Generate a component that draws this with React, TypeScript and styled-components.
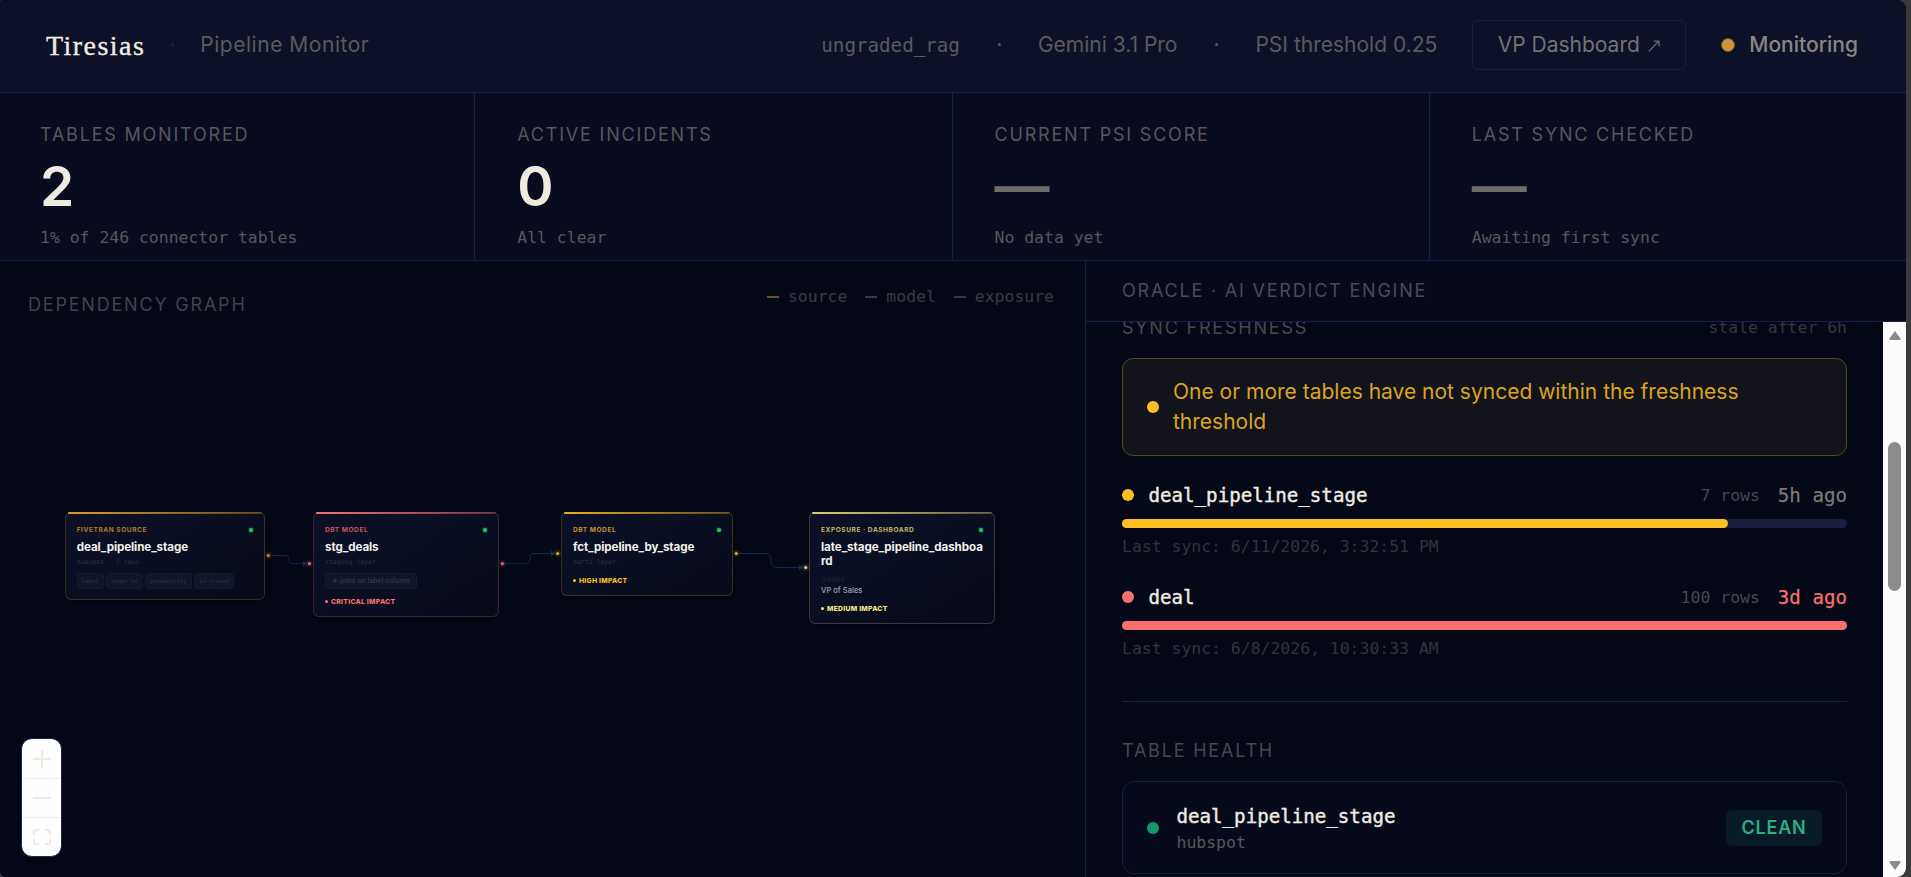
import React from 'react';
import styled, { createGlobalStyle } from 'styled-components';

const line = '#1a1f47';
const ink = '#050817';
const cream = '#f0ebe1';
const amber = '#fbbf24';
const red = '#f87171';
const sans = `Inter, "Liberation Sans", sans-serif`;
const mono = `Consolas, "DejaVu Sans Mono", monospace`;

const Global = createGlobalStyle`
  *, *::before, *::after { box-sizing: border-box; }
  html, body { margin: 0; height: 100%; background: #3a3a3a; overflow: hidden; }
`;

const Frame = styled.div`
  width: 1906px;
  height: 877px;
  overflow: hidden;
  border-radius: 3px 9px 9px 6px;
  background: ${ink};
  font-family: ${sans};
  color: ${cream};
`;
const Page = styled.div`
  width: 1908px;
  height: 877px;
  margin-left: -2px;
  display: flex;
  flex-direction: column;
`;

const Header = styled.header`
  height: 93px;
  flex: none;
  display: flex;
  align-items: center;
  padding: 0 48px;
  padding-bottom: 3px;
  background: #0d1127;
  border-bottom: 1px solid ${line};
`;
const Brand = styled.div`
  font: 400 28px/34px "Liberation Serif", serif;
  letter-spacing: 1.45px;
  -webkit-text-stroke: 0.35px ${cream};
  padding-top: 3px;
`;
const BrandDot = styled.span`
  width: 3px;
  height: 3px;
  border-radius: 50%;
  background: #20264f;
  margin: 0 26px;
`;
const Section = styled.div`
  font-size: 21px;
  letter-spacing: 0.53px;
  color: #5b595d;
`;
const HeaderMeta = styled.div`
  margin-left: auto;
  display: flex;
  align-items: center;
  font-size: 21px;
  color: #5b595d;
  white-space: nowrap;
`;
const Mono = styled.span`
  padding-top: 1px;
  font-family: ${mono};
  font-size: 19.2px;
`;
const MetaDot = styled.span`
  width: 3px;
  height: 3px;
  border-radius: 50%;
  background: #5b595d;
  margin: 0 37px 0 38px;
`;
const LinkButton = styled.button`
  width: 214px;
  height: 50px;
  margin: 0 35px;
  padding: 0 1px 0 0;
  border: 1px solid ${line};
  border-radius: 6px;
  background: transparent;
  color: #747175;
  font: 400 21px ${sans};
  display: flex;
  align-items: center;
  justify-content: center;
  gap: 8px;
  svg { margin-top: 3px; }
`;
const Live = styled.div`
  display: flex;
  align-items: center;
  gap: 14px;
  font-weight: 500;
  color: #898681;
`;
const LiveDot = styled.span`
  width: 14px;
  height: 14px;
  border-radius: 50%;
  background: #cb983b;
  border: 1px solid #6c5430;
`;

const Stats = styled.section`
  height: 168px;
  flex: none;
  display: grid;
  grid-template-columns: repeat(4, 1fr);
  gap: 1px;
  background: ${line};
  border-bottom: 1px solid ${line};
`;
const Stat = styled.div`
  background: #090b1f;
  padding: 31px 42px 0;
`;
const Caption = styled.div<{ $color?: string }>`
  font-size: 18px;
  line-height: 22px;
  letter-spacing: 1.8px;
  text-transform: uppercase;
  color: ${p => p.$color ?? '#58565a'};
  white-space: nowrap;
`;
const Figure = styled.div<{ $muted?: boolean }>`
  font-size: 55px;
  font-weight: 600;
  line-height: 56px;
  margin-top: 12px;
  letter-spacing: -1.1px;
  color: ${p => (p.$muted ? '#706d6d' : cream)};
`;
const StatNote = styled.div`
  font-family: ${mono};
  font-size: 16.45px;
  line-height: 20px;
  margin-top: 14px;
  color: #58565a;
`;

const Main = styled.main`
  flex: 1;
  min-height: 0;
  display: flex;
`;
const Graph = styled.section`
  width: 1087px;
  flex: none;
  display: flex;
  flex-direction: column;
  position: relative;
  background: ${ink};
`;
const GraphHead = styled.div`
  display: flex;
  justify-content: space-between;
  align-items: flex-start;
  padding: 26px 31px 0 30px;
`;
const GraphTitle = styled(Caption)`
  margin-top: 7px;
`;
const Legend = styled.div`
  display: flex;
  gap: 18px;
  font-family: ${mono};
  font-size: 16.45px;
  line-height: 20px;
  color: #3a3a43;
`;
const LegendItem = styled.span<{ $color: string }>`
  display: flex;
  align-items: center;
  gap: 9px;
  &::before {
    content: '';
    width: 12px;
    height: 2px;
    background: ${p => p.$color};
  }
`;

const Canvas = styled.div`
  position: absolute;
  left: 2px;
  top: -261px;
  width: 1085px;
  height: 877px;
  pointer-events: none;
`;
const Edges = styled.svg`
  position: absolute;
  inset: 0;
  fill: none;
  stroke: #1b2350;
  stroke-width: 1;
`;
const NodeCard = styled.article<{ $x: number; $w: number; $h: number; $c: string }>`
  position: absolute;
  left: ${p => p.$x}px;
  top: 511.5px;
  width: ${p => p.$w}px;
  height: ${p => p.$h}px;
  padding: 13px 11px 0;
  border: 1px solid ${p => p.$c}38;
  border-radius: 6px;
  background: linear-gradient(145deg, #0c1127, #070b1a);
  box-shadow: 0 3px 10px rgba(0, 0, 0, 0.4);
  &::before {
    content: '';
    position: absolute;
    left: 2px;
    right: 2px;
    top: -0.5px;
    height: 1.6px;
    border-radius: 2px;
    background: linear-gradient(90deg, ${p => p.$c}, ${p => p.$c}55);
  }
`;
const NodeTop = styled.div<{ $c: string }>`
  display: flex;
  justify-content: space-between;
  align-items: center;
  height: 8px;
  font-size: 6.6px;
  font-weight: 700;
  letter-spacing: 0.53px;
  color: ${p => p.$c};
  white-space: nowrap;
  &::after {
    content: '';
    width: 4px;
    height: 4px;
    border-radius: 50%;
    background: #22c55e;
    box-shadow: 0 0 2px #22c55e;
  }
`;
const NodeName = styled.div`
  margin-top: 6px;
  margin-right: -3px;
  font-size: 11.6px;
  font-weight: 700;
  line-height: 14px;
  letter-spacing: -0.07px;
  color: #f3f1ec;
  word-break: break-all;
`;
const NodeSub = styled.div`
  margin-top: 4px;
  font-family: ${mono};
  font-size: 6.5px;
  line-height: 9px;
  color: #2a3146;
`;
const Chips = styled.div`
  display: flex;
  gap: 2px;
  margin-top: 6px;
`;
const Chip = styled.span<{ $bold?: boolean }>`
  height: 16px;
  padding: 0 ${p => (p.$bold ? 6 : 4.3)}px;
  border: 1px solid #151b2e;
  border-radius: 3px;
  background: #101527;
  color: #2e3549;
  font-family: ${p => (p.$bold ? sans : mono)};
  font-weight: ${p => (p.$bold ? 600 : 400)};
  font-size: ${p => (p.$bold ? 6.9 : 5.5)}px;
  line-height: 14px;
  white-space: nowrap;
`;
const Impact = styled.div<{ $c: string; $top: number }>`
  display: flex;
  align-items: center;
  gap: 3px;
  margin-top: ${p => p.$top}px;
  height: 9px;
  font-size: 6.8px;
  font-weight: 800;
  letter-spacing: 0.27px;
  color: ${p => p.$c};
  &::before {
    content: '';
    width: 3px;
    height: 3px;
    border-radius: 50%;
    background: currentColor;
  }
`;
const Owner = styled.div`
  margin-top: 8px;
  font-size: 5.8px;
  line-height: 8px;
  letter-spacing: 0.5px;
  color: #222a3c;
`;
const OwnerName = styled.div`
  margin-top: 2px;
  font-size: 7.6px;
  font-weight: 500;
  line-height: 10px;
  color: #9aa4b5;
`;
const Controls = styled.div`
  position: absolute;
  left: 23px;
  bottom: 20px;
  width: 41px;
  height: 119px;
  border: 1px solid #1b2350;
  border-radius: 11px;
  background: #fefefe;
  overflow: hidden;
  display: grid;
  grid-template-rows: 1fr 1fr 1fr;
  box-shadow: 0 4px 14px rgba(0, 0, 0, 0.5);
`;
const ControlButton = styled.button`
  border: 0;
  padding: 0;
  background: transparent;
  display: flex;
  align-items: center;
  justify-content: center;
  & + & { border-top: 1px solid #ececec; }
  svg { fill: none; stroke: #f0ebe1; stroke-width: 2; }
`;

const Oracle = styled.section`
  flex: 1;
  min-width: 0;
  display: flex;
  flex-direction: column;
  border-left: 1px solid ${line};
`;
const OracleHead = styled.div`
  height: 61px;
  flex: none;
  padding: 19px 36px 0;
  background: #070a1b;
  border-bottom: 1px solid ${line};
`;
const ScrollRow = styled.div`
  flex: 1;
  min-height: 0;
  display: flex;
`;
const Scroll = styled.div`
  flex: 1;
  min-width: 0;
  overflow: hidden;
  padding: 0 36px;
  background: ${ink};
`;
const SectionHead = styled.div`
  display: flex;
  justify-content: space-between;
  align-items: center;
  height: 22px;
  margin-top: -5px;
`;
const HeadNote = styled.span`
  font-family: ${mono};
  font-size: 16.45px;
  line-height: 22px;
  color: #35353c;
`;
const Alert = styled.div`
  height: 98px;
  margin-top: 19px;
  padding: 0 24px;
  display: flex;
  align-items: center;
  gap: 14px;
  border: 1px solid #57451c;
  border-radius: 11px;
  background: #13131b;
  color: #daa522;
  font-size: 21px;
  line-height: 30px;
`;
const Dot = styled.span<{ $c: string }>`
  width: 12px;
  height: 12px;
  flex: none;
  border-radius: 50%;
  background: ${p => p.$c};
`;
const Sync = styled.div<{ $top: number }>`
  margin-top: ${p => p.$top}px;
`;
const SyncRow = styled.div`
  display: flex;
  align-items: center;
  height: 26px;
`;
const TableName = styled.span`
  font-family: ${mono};
  font-size: 19.15px;
  line-height: 26px;
  color: ${cream};
  -webkit-text-stroke: 0.4px currentColor;
`;
const SyncName = styled(TableName)`
  margin-left: 14.5px;
  padding-top: 1px;
`;
const Rows = styled.span`
  margin-left: auto;
  font-family: ${mono};
  font-size: 16.45px;
  color: #48474c;
`;
const Age = styled.span<{ $c: string }>`
  margin-left: 18px;
  padding-top: 1px;
  font-family: ${mono};
  font-size: 19.15px;
  color: ${p => p.$c};
  -webkit-text-stroke: 0.25px currentColor;
`;
const Track = styled.div`
  height: 9px;
  margin-top: 11px;
  border-radius: 5px;
  background: #1a1f42;
`;
const Fill = styled.div<{ $c: string }>`
  height: 9px;
  border-radius: 5px;
  background: ${p => p.$c};
`;
const LastSync = styled.div`
  margin-top: 9px;
  font-family: ${mono};
  font-size: 16.45px;
  line-height: 20px;
  color: #333339;
`;
const Divider = styled.div`
  height: 1px;
  margin: 42px 0 38px;
  background: ${line};
`;
const HealthCard = styled.div`
  height: 93px;
  margin-top: 19px;
  padding: 0 24px;
  display: flex;
  align-items: center;
  border: 1px solid ${line};
  border-radius: 12px;
  background: #070a1b;
`;
const HealthText = styled.div`
  display: flex;
  flex-direction: column;
  margin-left: 17.5px;
  padding-top: 4px;
`;
const HealthSource = styled.span`
  font-family: ${mono};
  font-size: 16.45px;
  line-height: 26px;
  color: #58565a;
`;
const Badge = styled.span`
  width: 96px;
  height: 36px;
  margin-left: auto;
  border-radius: 6px;
  background: #081b27;
  color: #2cae80;
  font-size: 18px;
  font-weight: 600;
  letter-spacing: 0.8px;
  line-height: 36px;
  text-align: center;
`;
const Scrollbar = styled.div`
  width: 23px;
  padding: 9px 5px 7px;
  background: #fcfcfc;
  display: flex;
  flex-direction: column;
  align-items: center;
  svg { flex: none; fill: #8b8b8b; }
`;
const Thumb = styled.div`
  width: 13px;
  height: 149px;
  margin-top: 102px;
  margin-bottom: auto;
  border-radius: 7px;
  background: #8b8b8b;
`;

const stats = [
  { label: 'Tables monitored', value: '2', note: '1% of 246 connector tables' },
  { label: 'Active incidents', value: '0', note: 'All clear' },
  { label: 'Current PSI score', value: '—', note: 'No data yet' },
  { label: 'Last sync checked', value: '—', note: 'Awaiting first sync' },
];

const edges = [
  'M272 555.5H286Q289 555.5 289 559.5Q289 563.7 293 563.7H303',
  'M505 563.7H526Q530 563.7 530 558.6Q530 553.5 534 553.5H551',
  'M739 553.5H766Q771 553.5 771 560.5Q771 567.5 776 567.5H799',
];
const arrows = [[303, 563.7], [551, 553.5], [799, 567.5]];
const handles: [number, number, string][] = [
  [268.3, 555.5, '#d99a2b'], [309.5, 563.7, red], [502.3, 563.7, red],
  [557.7, 553.5, amber], [736.2, 553.5, amber], [805.8, 567.5, '#fde68a'],
];

export default function App() {
  return (
    <Frame>
      <Global />
      <Page>
        <Header>
          <Brand>Tiresias</Brand>
          <BrandDot />
          <Section>Pipeline Monitor</Section>
          <HeaderMeta>
            <Mono>ungraded_rag</Mono>
            <MetaDot />
            <span>Gemini 3.1 Pro</span>
            <MetaDot />
            <span>PSI threshold 0.25</span>
            <LinkButton>
              VP Dashboard
              <svg width="12" height="12" viewBox="0 0 12 12" fill="none" stroke="currentColor" strokeWidth="1.2">
                <path d="M.8 11.4L10.6 1.4M5.8 1.1H11V6.2" />
              </svg>
            </LinkButton>
            <Live><LiveDot />Monitoring</Live>
          </HeaderMeta>
        </Header>
        <Stats>
          {stats.map(s => (
            <Stat key={s.label}>
              <Caption>{s.label}</Caption>
              <Figure $muted={s.value === '—'}>{s.value}</Figure>
              <StatNote>{s.note}</StatNote>
            </Stat>
          ))}
        </Stats>
        <Main>
          <Graph>
            <GraphHead>
              <GraphTitle $color="#434249">Dependency graph</GraphTitle>
              <Legend>
                <LegendItem $color="#6b4f1e">source</LegendItem>
                <LegendItem $color="#3a3a43">model</LegendItem>
                <LegendItem $color="#3a3a43">exposure</LegendItem>
              </Legend>
            </GraphHead>
            <Canvas>
              <Edges width="1085" height="877">
                {edges.map(d => <path key={d} d={d} />)}
                {arrows.map(([x, y]) => (
                  <path key={x} d={`M${x} ${y - 3}L${x + 4} ${y}L${x} ${y + 3}Z`} fill="#232b5c" stroke="none" />
                ))}
                {handles.map(([x, y, c]) => (
                  <g key={x} stroke="none" fill={c}>
                    <circle cx={x} cy={y} r="3.4" opacity="0.15" />
                    <circle cx={x} cy={y} r="1.6" />
                  </g>
                ))}
              </Edges>
              <NodeCard $x={64.7} $w={200.3} $h={88.3} $c="#d99a2b">
                <NodeTop $c="#b07a2c">FIVETRAN SOURCE</NodeTop>
                <NodeName>deal_pipeline_stage</NodeName>
                <NodeSub>hubspot · 7 rows</NodeSub>
                <Chips>
                  <Chip>label</Chip><Chip>stage_id</Chip><Chip>probability</Chip><Chip>is_closed</Chip>
                </Chips>
              </NodeCard>
              <NodeCard $x={313} $w={186} $h={105} $c={red}>
                <NodeTop $c="#c9525b">DBT MODEL</NodeTop>
                <NodeName>stg_deals</NodeName>
                <NodeSub>staging layer</NodeSub>
                <Chips><Chip $bold>✦ joins on label column</Chip></Chips>
                <Impact $c={red} $top={8}>CRITICAL IMPACT</Impact>
              </NodeCard>
              <NodeCard $x={561} $w={172} $h={84.3} $c="#e5ad22">
                <NodeTop $c="#c4902a">DBT MODEL</NodeTop>
                <NodeName>fct_pipeline_by_stage</NodeName>
                <NodeSub>marts layer</NodeSub>
                <Impact $c={amber} $top={9}>HIGH IMPACT</Impact>
              </NodeCard>
              <NodeCard $x={809} $w={186} $h={112.3} $c="#e0cb77">
                <NodeTop $c="#c9b465">EXPOSURE · DASHBOARD</NodeTop>
                <NodeName>late_stage_pipeline_dashboard</NodeName>
                <Owner>OWNER</Owner>
                <OwnerName>VP of Sales</OwnerName>
                <Impact $c="#fde68a" $top={8}>MEDIUM IMPACT</Impact>
              </NodeCard>
            </Canvas>
            <Controls>
              <ControlButton aria-label="Zoom in">
                <svg width="18" height="18"><path d="M0 9H18M9 0V18" /></svg>
              </ControlButton>
              <ControlButton aria-label="Zoom out">
                <svg width="18" height="18"><path d="M0 9H18" /></svg>
              </ControlButton>
              <ControlButton aria-label="Fit view">
                <svg width="18" height="16"><path d="M1 6V3Q1 1 3 1H6M12 1H15Q17 1 17 3V6M17 10V13Q17 15 15 15H12M6 15H3Q1 15 1 13V10" /></svg>
              </ControlButton>
            </Controls>
          </Graph>
          <Oracle>
            <OracleHead><Caption $color="#4b4a50">Oracle · AI verdict engine</Caption></OracleHead>
            <ScrollRow>
              <Scroll>
                <SectionHead>
                  <Caption $color="#48474c">Sync freshness</Caption>
                  <HeadNote>stale after 6h</HeadNote>
                </SectionHead>
                <Alert>
                  <Dot $c={amber} />
                  <span>One or more tables have not synced within the freshness threshold</span>
                </Alert>
                <Sync $top={26}>
                  <SyncRow>
                    <Dot $c={amber} />
                    <SyncName>deal_pipeline_stage</SyncName>
                    <Rows>7 rows</Rows>
                    <Age $c="#7d7a76">5h ago</Age>
                  </SyncRow>
                  <Track><Fill $c={amber} style={{ width: '83.6%' }} /></Track>
                  <LastSync>Last sync: 6/11/2026, 3:32:51 PM</LastSync>
                </Sync>
                <Sync $top={27}>
                  <SyncRow>
                    <Dot $c={red} />
                    <SyncName>deal</SyncName>
                    <Rows>100 rows</Rows>
                    <Age $c={red}>3d ago</Age>
                  </SyncRow>
                  <Track><Fill $c={red} style={{ width: '100%' }} /></Track>
                  <LastSync>Last sync: 6/8/2026, 10:30:33 AM</LastSync>
                </Sync>
                <Divider />
                <Caption $color="#48474c">Table health</Caption>
                <HealthCard>
                  <Dot $c="#12966c" />
                  <HealthText>
                    <TableName>deal_pipeline_stage</TableName>
                    <HealthSource>hubspot</HealthSource>
                  </HealthText>
                  <Badge>CLEAN</Badge>
                </HealthCard>
              </Scroll>
              <Scrollbar>
                <svg width="12" height="9"><path d="M6 0L11.5 7.5Q11.5 9 10.5 9H1.5Q.5 9 .5 7.5Z" /></svg>
                <Thumb />
                <svg width="12" height="9"><path d="M6 9L11.5 1.5Q11.5 0 10.5 0H1.5Q.5 0 .5 1.5Z" /></svg>
              </Scrollbar>
            </ScrollRow>
          </Oracle>
        </Main>
      </Page>
    </Frame>
  );
}
